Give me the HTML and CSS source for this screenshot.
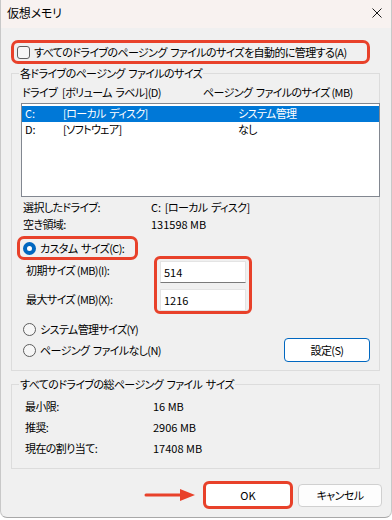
FILE: index.html
```html
<!DOCTYPE html>
<html lang="ja">
<head>
<meta charset="utf-8">
<link rel="stylesheet" href="styles.css">
</head>
<body>
<div class="window">
  <div class="titlebar">
    <span class="title">仮想メモリ</span>
    <svg class="close" width="10" height="10" viewBox="0 0 10 10"><path d="M0.5 0.5 L9.5 9.5 M9.5 0.5 L0.5 9.5" stroke="#1a1a1a" stroke-width="1" fill="none"/></svg>
  </div>
  <div class="content">
    <div class="auto-row hl"><span class="checkbox"></span><span>すべてのドライブのページング<span class="sp"> </span>ファイルのサイズを自動的に管理する(A)</span></div>

    <fieldset class="group drives">
      <legend>各ドライブのページング<span class="sp"> </span>ファイルのサイズ</legend>
      <div class="list-head"><span>ドライブ</span><span>[ボリューム<span class="sp"> </span>ラベル](D)</span><span>ページング<span class="sp"> </span>ファイルのサイズ (MB)</span></div>
      <div class="listbox">
        <div class="list-row selected"><span class="num">C:</span><span>[ローカル<span class="sp"> </span>ディスク]</span><span>システム管理</span></div>
        <div class="list-row"><span class="num">D:</span><span>[ソフトウェア]</span><span>なし</span></div>
      </div>
      <div class="info">
        <span>選択したドライブ:</span><span><span class="num">C:</span>&nbsp;&nbsp;[ローカル<span class="sp"> </span>ディスク]</span>
        <span>空き領域:</span><span class="num">131598 MB</span>
      </div>
      <div class="radio-row custom hl"><span class="radio on"></span><span>カスタム<span class="sp"> </span>サイズ(C):</span></div>
      <div class="custom-fields">
        <div class="field-labels"><span>初期サイズ (MB)(I):</span><span>最大サイズ (MB)(X):</span></div>
        <div class="field-inputs hl"><div class="input focused num">514</div><div class="input num">1216</div></div>
      </div>
      <div class="bottom">
        <div class="radios">
          <div class="radio-row"><span class="radio"></span><span>システム管理サイズ(Y)</span></div>
          <div class="radio-row"><span class="radio"></span><span>ページング<span class="sp"> </span>ファイルなし(N)</span></div>
        </div>
        <div class="btn set">設定(S)</div>
      </div>
    </fieldset>

    <fieldset class="group totals">
      <legend>すべてのドライブの総ページング<span class="sp"> </span>ファイル<span class="sp"> </span>サイズ</legend>
      <div class="totals-grid">
        <span>最小限:</span><span class="num">16 MB</span>
        <span>推奨:</span><span class="num">2906 MB</span>
        <span>現在の割り当て:</span><span class="num">17408 MB</span>
      </div>
    </fieldset>

    <div class="footer">
      <svg class="arrow" width="52" height="14" viewBox="0 0 52 14"><path d="M2 7 H42" stroke="#e8412a" stroke-width="3" stroke-linecap="round"/><path d="M36 1 L51 7 L36 13 Z" fill="#e8412a"/></svg>
      <div class="btn ok hl num">OK</div>
      <div class="btn cancel">キャンセル</div>
    </div>
  </div>
</div>
</body>
</html>
```

FILE: styles.css
```css
html, body {
  margin: 0;
  padding: 0;
  background: #ffffff;
}
body {
  width: 392px;
  height: 520px;
  overflow: hidden;
  font-family: "Noto Sans CJK JP", "Noto Sans", sans-serif;
  font-size: 11px;
  letter-spacing: -0.6px;
  line-height: 16px;
  color: #000;
  font-feature-settings: "palt";
}
.num {
  letter-spacing: 0;
}
.sp {
  letter-spacing: 1px;
}
.window {
  width: 392px;
  height: 518px;
  box-sizing: border-box;
  background: #f0f0f0;
  border-bottom: 1px solid #a8a8a8;
  border-left: 1px solid #c8c8c8;
  border-right: 1px solid #c8c8c8;
  border-radius: 0 0 7px 7px;
  overflow: hidden;
}
.titlebar {
  height: 28px;
  box-sizing: border-box;
  background: #f8f2f0;
  display: flex;
  justify-content: space-between;
  align-items: flex-start;
  padding: 5px 9px 0 6px;
}
.title {
  font-size: 12px;
  letter-spacing: -0.2px;
}
.close {
  margin-top: 3px;
}
.content {
  padding: 0 0 0 10px;
}
.hl {
  outline: 3px solid #e8412a;
  border-radius: 4px;
}
.auto-row {
  margin: 15px 0 0 3px;
  width: 353px;
  height: 18px;
  display: flex;
  align-items: center;
  gap: 4px;
  padding-left: 3px;
  box-sizing: border-box;
  white-space: nowrap;
}
.checkbox {
  width: 13px;
  height: 13px;
  box-sizing: border-box;
  border: 1px solid #5f5f5f;
  border-radius: 3px;
  background: #f6f6f6;
  flex: none;
}
.group {
  margin: 0;
  padding: 0;
  border: 1px solid #dcdcdc;
  width: 369px;
  box-sizing: border-box;
  min-width: 0;
}
.group legend {
  margin-left: 7px;
  padding: 0 1px;
  line-height: 16px;
}
.drives {
  margin-top: 4px;
  padding-bottom: 8px;
}
.list-head {
  display: grid;
  grid-template-columns: 40px 141px auto;
  margin: 3px 0 0 10px;
  white-space: nowrap;
}
.listbox {
  margin: 3px -1px 0 9px;
  height: 94px;
  box-sizing: border-box;
  border: 1px solid #828790;
  background: #fff;
  padding-top: 2px;
}
.list-row {
  display: grid;
  grid-template-columns: 38px 175px auto;
  padding-left: 3px;
  height: 16px;
  line-height: 15px;
  white-space: nowrap;
}
.list-row.selected {
  background: #0078d7;
  color: #fff;
}
.info {
  display: grid;
  grid-template-columns: 128px auto;
  margin: 2px 0 0 11px;
  line-height: 17px;
  white-space: nowrap;
}
.radio-row {
  display: flex;
  align-items: center;
  gap: 4px;
  white-space: nowrap;
}
.custom {
  margin: 6px 0 0 8px;
  width: 115px;
  height: 18px;
  padding-left: 3px;
  box-sizing: border-box;
}
.radio {
  width: 13px;
  height: 13px;
  box-sizing: border-box;
  border: 1px solid #5d5d5d;
  border-radius: 50%;
  background: #f6f6f6;
  flex: none;
}
.radio.on {
  border: 4px solid #0067c0;
  background: #fff;
}
.custom-fields {
  display: flex;
  margin-top: 2px;
}
.field-labels {
  width: 131px;
  margin-left: 14px;
  padding-top: 3px;
  display: flex;
  flex-direction: column;
  gap: 13px;
  white-space: nowrap;
}
.field-inputs {
  width: 92px;
  box-sizing: border-box;
  padding: 2px 3px 0;
  display: flex;
  flex-direction: column;
  gap: 6px;
  border-radius: 3px;
}
.input {
  height: 22px;
  box-sizing: border-box;
  background: #fff;
  border: 1px solid #e4e4e4;
  padding-left: 3px;
  line-height: 20px;
}
.input.focused {
  border-bottom-color: #7a7a7a;
}
.bottom {
  display: flex;
  justify-content: space-between;
  align-items: flex-end;
  margin-top: 10px;
  padding: 0 9px 0 11px;
}
.radios {
  display: flex;
  flex-direction: column;
  gap: 5px;
  padding-bottom: 4px;
}
.btn {
  box-sizing: border-box;
  background: #fdfdfd;
  border: 1px solid #d0d0d0;
  border-radius: 4px;
  text-align: center;
}
.set {
  width: 86px;
  height: 24px;
  line-height: 22px;
  border-color: #0067c0;
  background: #fff;
}
.totals {
  margin-top: 5px;
  padding-bottom: 9px;
}
.totals-grid {
  display: grid;
  grid-template-columns: 128px auto;
  margin: 4px 0 0 13px;
  line-height: 21px;
}
.footer {
  display: flex;
  justify-content: flex-end;
  align-items: center;
  margin-top: 14px;
  padding-right: 9px;
}
.arrow {
  margin-right: 9px;
}
.ok {
  width: 86px;
  height: 24px;
  line-height: 22px;
  outline-offset: -1px;
  background: #fff;
  border-radius: 4px;
}
.cancel {
  width: 84px;
  height: 23px;
  line-height: 21px;
  margin-left: 7px;
}
```
